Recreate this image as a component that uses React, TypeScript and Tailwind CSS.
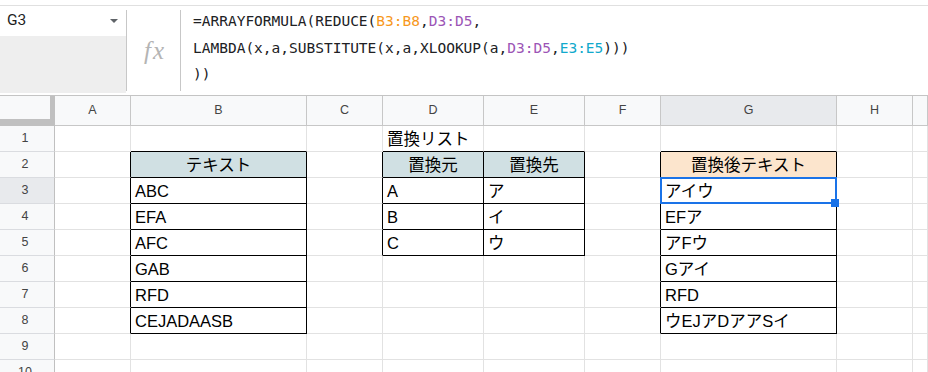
import React from 'react';

const COLW = [
  'w-[55px]',
  'w-[76px]',
  'w-[176px]',
  'w-[76px]',
  'w-[101px]',
  'w-[101px]',
  'w-[76px]',
  'w-[176px]',
  'w-[76px]',
  'flex-1',
];
const LETTERS = ['', 'A', 'B', 'C', 'D', 'E', 'F', 'G', 'H', ''];

type Cell = { t: string; fill?: 'cyan' | 'peach'; center?: boolean };

const DATA: Record<string, Cell> = {
  '1-4': { t: '置換リスト' },
  '2-2': { t: 'テキスト', fill: 'cyan', center: true },
  '2-4': { t: '置換元', fill: 'cyan', center: true },
  '2-5': { t: '置換先', fill: 'cyan', center: true },
  '2-7': { t: '置換後テキスト', fill: 'peach', center: true },
  '3-2': { t: 'ABC' },
  '3-4': { t: 'A' },
  '3-5': { t: 'ア' },
  '3-7': { t: 'アイウ' },
  '4-2': { t: 'EFA' },
  '4-4': { t: 'B' },
  '4-5': { t: 'イ' },
  '4-7': { t: 'EFア' },
  '5-2': { t: 'AFC' },
  '5-4': { t: 'C' },
  '5-5': { t: 'ウ' },
  '5-7': { t: 'アFウ' },
  '6-2': { t: 'GAB' },
  '6-7': { t: 'Gアイ' },
  '7-2': { t: 'RFD' },
  '7-7': { t: 'RFD' },
  '8-2': { t: 'CEJADAASB' },
  '8-7': { t: 'ウEJアDアアSイ' },
};

function inTable(r: number, c: number) {
  if (c === 2 && r >= 2 && r <= 8) return true;
  if ((c === 4 || c === 5) && r >= 2 && r <= 5) return true;
  if (c === 7 && r >= 2 && r <= 8) return true;
  return false;
}

function GridCell({ r, c }: { r: number; c: number }) {
  const d = DATA[`${r}-${c}`];
  const rb = inTable(r, c) || inTable(r, c + 1);
  const bb = inTable(r, c) || inTable(r + 1, c);
  const selected = r === 3 && c === 7;
  const fill =
    d?.fill === 'cyan' ? 'bg-[#d0e0e3]' : d?.fill === 'peach' ? 'bg-[#fce5cd]' : 'bg-white';
  return (
    <div
      className={`${COLW[c]} shrink-0 h-full relative border-r border-b ${
        rb ? 'border-r-black' : 'border-r-[#e2e2e2]'
      } ${bb ? 'border-b-black' : 'border-b-[#e2e2e2]'} ${fill} ${selected ? 'z-10' : ''}`}
    >
      {d && (
        <div
          className={`h-full pt-[2px] leading-[23px] text-[16.5px] text-black whitespace-nowrap ${
            d.center ? 'text-center' : 'pl-[4px]'
          }`}
        >
          {d.t}
        </div>
      )}
      {selected && (
        <>
          <div className="absolute left-[-1px] top-[-1px] w-[177px] h-[27px] border-2 border-[#1a73e8] pointer-events-none" />
          <div className="absolute left-[170px] top-[21px] w-[8px] h-[8px] bg-[#1a73e8]" />
        </>
      )}
    </div>
  );
}

function Row({ r }: { r: number }) {
  const sel = r === 3;
  return (
    <div className="flex h-[26px] shrink-0">
      <div
        className={`${COLW[0]} shrink-0 h-full border-r border-r-[#c0c0c0] border-b border-b-[#dadce0] flex items-center justify-center pr-[4px] text-[12.5px] text-[#444] ${
          sel ? 'bg-[#e8eaed]' : 'bg-[#f8f9fa]'
        }`}
      >
        {r}
      </div>
      {[1, 2, 3, 4, 5, 6, 7, 8, 9].map((c) => (
        <GridCell key={c} r={r} c={c} />
      ))}
    </div>
  );
}

export default function App() {
  return (
    <div className="w-[928px] h-[372px] overflow-hidden bg-white flex flex-col font-['Liberation_Sans','Noto_Sans_CJK_JP',sans-serif]">
      {/* top strip */}
      <div className="h-[6px] shrink-0 border-b border-[#e0e0e0]" />

      {/* formula bar */}
      <div className="flex h-[90px] shrink-0 border-b border-[#c4c4c4]">
        <div className="w-[126px] shrink-0 flex flex-col">
          <div className="h-[30px] flex items-center justify-between pl-[7px] pr-[8px]">
            <span className="text-[15.5px] text-[#1f1f1f] font-['Roboto','Liberation_Sans',sans-serif]">
              G3
            </span>
            <span className="w-0 h-0 border-l-[4px] border-r-[4px] border-t-[4px] border-l-transparent border-r-transparent border-t-[#5f6368]" />
          </div>
          <div className="h-[57px] bg-[#eeeeee]" />
        </div>
        <div className="w-px my-[4px] bg-[#c7c7c7] shrink-0" />
        <div className="w-[53px] shrink-0 flex items-center justify-center pl-[3px]">
          <span className="italic text-[25px] tracking-[2px] text-[#b4b4b4] font-['Liberation_Serif',serif] leading-none">
            fx
          </span>
        </div>
        <div className="w-px my-[4px] bg-[#c7c7c7] shrink-0" />
        <div className="pl-[12px] pt-[2px] text-[14.5px] leading-[26.5px] text-[#202124] font-['DejaVu_Sans_Mono',monospace] whitespace-pre">
          <div>
            =ARRAYFORMULA(REDUCE(<span className="text-[#f7981d]">B3:B8</span>,
            <span className="text-[#9c55b6]">D3:D5</span>,
          </div>
          <div>
            LAMBDA(x,a,SUBSTITUTE(x,a,XLOOKUP(a,<span className="text-[#9c55b6]">D3:D5</span>,
            <span className="text-[#11a9cc]">E3:E5</span>)))
          </div>
          <div>))</div>
        </div>
      </div>

      {/* column headers */}
      <div className="flex h-[30px] shrink-0">
        <div className="w-[55px] shrink-0 h-full bg-[#f8f9fa] border-r-[5px] border-b-[7px] border-[#c0c0c0]" />
        {[1, 2, 3, 4, 5, 6, 7, 8, 9].map((c) => (
          <div
            key={c}
            className={`${COLW[c]} shrink-0 h-full border-r border-b border-[#c7c7c7] flex items-center justify-center text-[12.5px] text-[#444] ${
              c === 7 ? 'bg-[#e8eaed]' : 'bg-[#f8f9fa]'
            }`}
          >
            {LETTERS[c]}
          </div>
        ))}
      </div>

      {/* rows */}
      {[1, 2, 3, 4, 5, 6, 7, 8, 9, 10].map((r) => (
        <Row key={r} r={r} />
      ))}
    </div>
  );
}
